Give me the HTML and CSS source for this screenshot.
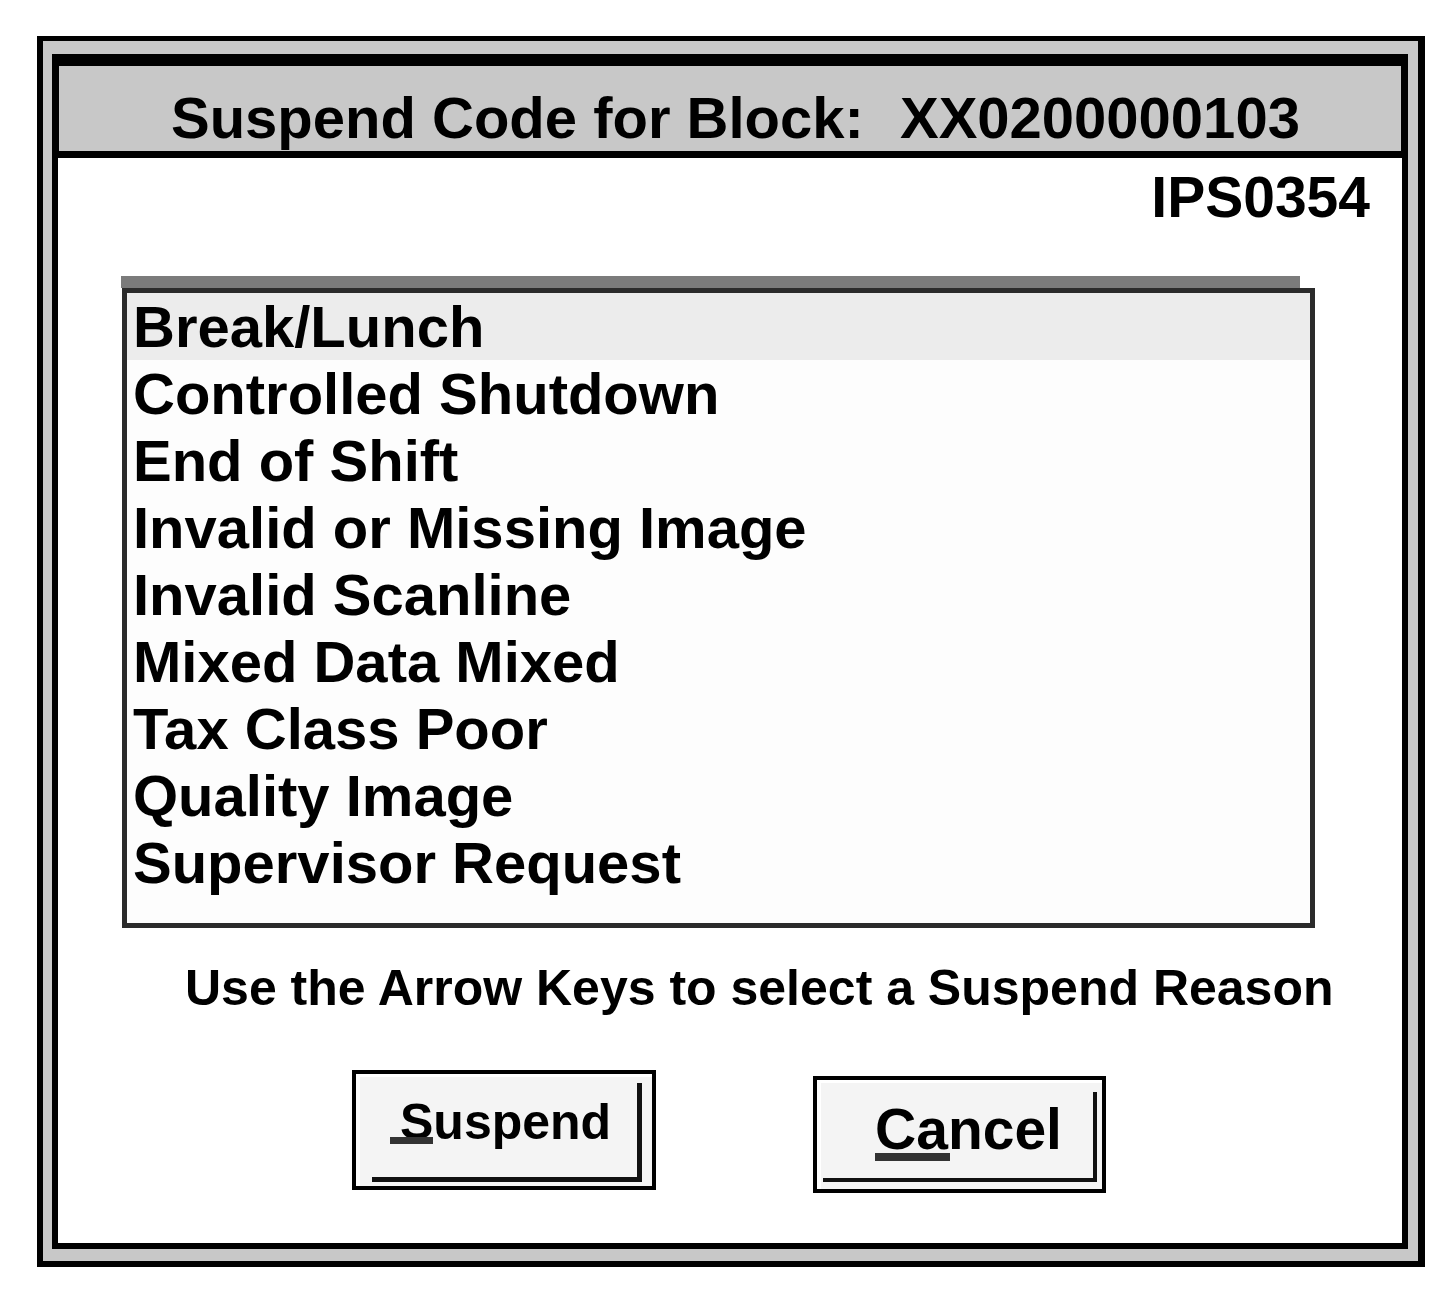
FILE: index.html
```html
<!DOCTYPE html>
<html lang="en">
<head>
<meta charset="utf-8">
<title>Suspend Code for Block</title>
<link rel="stylesheet" href="styles.css">
</head>
<body>
<div class="frame">
  <div class="dialog">
    <div class="titlebar">Suspend Code for Block: <span class="block-id">XX0200000103</span></div>
    <div class="code">IPS0354</div>
    <div class="list-wrap">
      <div class="list-shadow"></div>
      <div class="listbox">
        <div class="item selected">Break/Lunch</div>
        <div class="item">Controlled Shutdown</div>
        <div class="item">End of Shift</div>
        <div class="item">Invalid or Missing Image</div>
        <div class="item">Invalid Scanline</div>
        <div class="item">Mixed Data Mixed</div>
        <div class="item">Tax Class Poor</div>
        <div class="item">Quality Image</div>
        <div class="item">Supervisor Request</div>
      </div>
    </div>
    <div class="hint">Use the Arrow Keys to select a Suspend Reason</div>
    <div class="buttons">
      <div class="btn btn-suspend"><div class="face"><span class="mn mn-s">S</span>uspend</div></div>
      <div class="btn btn-cancel"><div class="face"><span class="mn mn-c">Ca</span>ncel</div></div>
    </div>
  </div>
</div>
</body>
</html>
```
FILE: styles.css
```css
html, body {
  margin: 0;
  padding: 0;
  background: #fff;
}
body {
  font-family: "Liberation Sans", Arial, sans-serif;
  font-weight: bold;
  color: #000;
}
.frame {
  margin: 36px 0 0 37px;
  width: 1388px;
  height: 1231px;
  box-sizing: border-box;
  border-style: solid;
  border-color: #000;
  border-width: 5px 7px 6px 6px;
  background: #c8c8c8;
  padding: 13px 10px 12px 9px;
}
.dialog {
  height: 100%;
  box-sizing: border-box;
  border: 6px solid #000;
  background: #fff;
  display: flex;
  flex-direction: column;
}
.titlebar {
  border-top: 6px solid #000;
  border-bottom: 7px solid #000;
  border-left: 1px solid #000;
  border-right: 1px solid #000;
  background: #c8c8c8;
  height: 62px;
  padding: 23px 0 0 112px;
  font-size: 58px;
  line-height: 58px;
  white-space: nowrap;
}
.block-id {
  margin-left: 20px;
}
.code {
  margin-top: 11px;
  text-align: right;
  padding-right: 32px;
  font-size: 57px;
  line-height: 57px;
}
.list-wrap {
  margin-top: 50px;
  margin-left: 63px;
}
.list-shadow {
  width: 1179px;
  height: 12px;
  background: #7b7b7b;
}
.listbox {
  margin-left: 1px;
  width: 1193px;
  height: 640px;
  box-sizing: border-box;
  border: 5px solid #2b2b2b;
  background: #fdfdfd;
  padding-left: 6px;
}
.item {
  font-size: 58px;
  line-height: 67px;
  white-space: nowrap;
}
.item.selected {
  background: #ececec;
  margin-left: -6px;
  padding-left: 6px;
}
.hint {
  margin-top: 35px;
  padding-left: 127px;
  font-size: 50px;
  line-height: 50px;
  white-space: nowrap;
}
.buttons {
  display: flex;
  align-items: flex-start;
  margin-top: 57px;
  padding-left: 294px;
  gap: 157px;
}
.btn {
  box-sizing: border-box;
  border: 4px solid #000;
  background: #f4f4f4;
  box-shadow: inset 4px 3px 0 #fff;
  display: flex;
}
.btn .face {
  flex: 1;
  border-right: 5px solid #111;
  border-bottom: 5px solid #111;
  white-space: nowrap;
}
.btn-suspend {
  width: 304px;
  height: 120px;
}
.btn-suspend .face {
  margin: 9px 10px 4px 16px;
  padding: 15px 0 0 28px;
  font-size: 50px;
  line-height: 49px;
}
.btn-cancel {
  width: 293px;
  height: 117px;
  margin-top: 6px;
}
.btn-cancel .face {
  margin: 12px 5px 7px 6px;
  border-right-width: 4px;
  border-bottom-width: 4px;
  padding: 9px 0 0 52px;
  font-size: 57px;
  line-height: 56px;
}
.mn {
  position: relative;
}
.mn::after {
  content: "";
  position: absolute;
  background: #333;
}
.mn-s::after {
  left: -10px;
  right: 0;
  bottom: 6px;
  height: 7px;
}
.mn-c::after {
  left: 0;
  right: -2px;
  bottom: 0;
  height: 8px;
}
```
